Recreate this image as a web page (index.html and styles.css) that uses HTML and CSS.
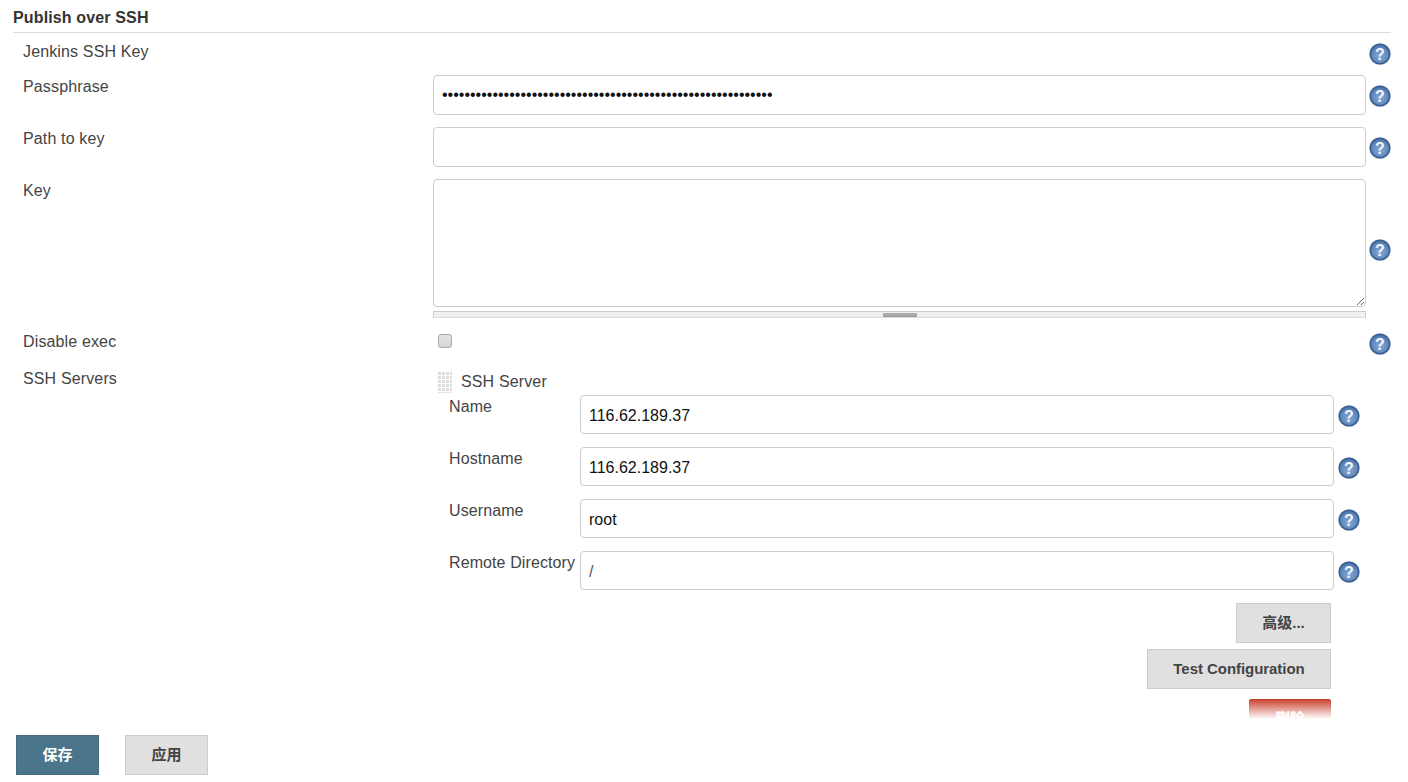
FILE: index.html
```html
<!DOCTYPE html>
<html lang="zh">
<head>
<meta charset="utf-8">
<title>Publish over SSH</title>
<link rel="stylesheet" href="styles.css">
</head>
<body>
<svg class="defs" width="0" height="0" aria-hidden="true">
  <defs>
    <radialGradient id="hg" cx="50%" cy="60%" r="55%">
      <stop offset="0" stop-color="#86a8d3"/>
      <stop offset="0.75" stop-color="#6189bd"/>
      <stop offset="1" stop-color="#4c74a8"/>
    </radialGradient>
    <symbol id="help" viewBox="0 0 22 22">
      <circle cx="11" cy="11" r="10.8" fill="#b4c5dc"/>
      <circle cx="11" cy="11" r="9.7" fill="url(#hg)" stroke="#3b5f92" stroke-width="1.5"/>
      <text x="11" y="17" text-anchor="middle" class="q">?</text>
    </symbol>
  </defs>
</svg>
<main class="page">
  <h3 class="title">Publish over SSH</h3>
  <div class="row row-key">
    <label class="lbl">Jenkins SSH Key</label>
    <div class="field"></div>
    <svg class="help"><use href="#help"/></svg>
  </div>
  <div class="row row-input">
    <label class="lbl">Passphrase</label>
    <div class="field"><input class="inp" type="password" value="•••••••••••••••••••••••••••••••••••••••••••••••••••••••••••"></div>
    <svg class="help"><use href="#help"/></svg>
  </div>
  <div class="row row-input">
    <label class="lbl">Path to key</label>
    <div class="field"><input class="inp" type="text"></div>
    <svg class="help"><use href="#help"/></svg>
  </div>
  <div class="row row-area">
    <label class="lbl">Key</label>
    <div class="field">
      <textarea class="area"></textarea>
      <div class="grip"><span class="grip-h"></span></div>
    </div>
    <svg class="help"><use href="#help"/></svg>
  </div>
  <div class="row row-check">
    <label class="lbl">Disable exec</label>
    <div class="field"><input class="chk" type="checkbox"></div>
    <svg class="help"><use href="#help"/></svg>
  </div>
  <div class="row row-servers">
    <label class="lbl">SSH Servers</label>
    <div class="field servers">
      <div class="srv-head"><span class="handle"></span><span>SSH Server</span></div>
      <div class="sub">
        <label class="lbl">Name</label>
        <input class="inp" type="text" value="116.62.189.37">
        <svg class="help"><use href="#help"/></svg>
      </div>
      <div class="sub">
        <label class="lbl">Hostname</label>
        <input class="inp" type="text" value="116.62.189.37">
        <svg class="help"><use href="#help"/></svg>
      </div>
      <div class="sub">
        <label class="lbl">Username</label>
        <input class="inp" type="text" value="root">
        <svg class="help"><use href="#help"/></svg>
      </div>
      <div class="sub">
        <label class="lbl">Remote Directory</label>
        <input class="inp dir" type="text" value="/">
        <svg class="help"><use href="#help"/></svg>
      </div>
      <div class="actions">
        <button class="btn adv">高级...</button>
        <button class="btn test">Test Configuration</button>
        <button class="btn del">删除</button>
      </div>
    </div>
  </div>
</main>
<footer class="bar">
  <button class="btn save">保存</button>
  <button class="btn apply">应用</button>
</footer>
</body>
</html>
```
FILE: styles.css
```css
* { box-sizing: border-box; }
html, body { margin: 0; height: 100%; }
body {
  position: relative;
  height: 782px;
  overflow: hidden;
  background: #fff;
  color: #333;
  font: 16px/20px "Liberation Sans", "Noto Sans CJK SC", sans-serif;
}
.defs { position: absolute; }
.q { font: bold 16px "Liberation Sans", sans-serif; fill: #f2f5fa; }
.page { margin-left: 13px; width: 1378px; }
.title {
  margin: 0;
  height: 33px;
  padding-top: 8px;
  font-size: 16px;
  font-weight: bold;
  letter-spacing: 0.14px;
  border-bottom: 1px solid #ddd;
}
.row {
  display: grid;
  grid-template-columns: 410px 933px 22px;
  column-gap: 0;
  margin-left: 10px;
}
.help { width: 22px; height: 22px; margin-left: 3px; overflow: visible; flex: none; }
.lbl { display: block; color: #444; letter-spacing: 0.14px; }
.row-key { height: 42px; padding-top: 9px; }
.row-input { height: 52px; }
.row-input .lbl { padding-top: 2px; }
.row-input .help { margin-top: 10px; }
.row-key .help { margin-top: 1px; }
.inp {
  display: block;
  width: 100%;
  height: 40px;
  padding: 0 8px;
  border: 1px solid #ccc;
  border-radius: 4px;
  background: #fff;
  color: #111;
  font: 16px "Liberation Sans", sans-serif;
  outline: none;
}
.row-area { height: 151px; }
.row-area .lbl { padding-top: 2px; }
.row-area .help { margin-top: 60px; }
.area {
  display: block;
  width: 100%;
  height: 128px;
  border: 1px solid #ccc;
  border-radius: 4px;
  background: #fff;
  outline: none;
}
.grip {
  display: flex;
  justify-content: center;
  height: 7px;
  margin-top: 4px;
  background: #f0f0f0;
  border: 1px solid #ccc;
  border-width: 1px 1px 0 1px;
  border-bottom: 1px solid #ddd;
}
.grip-h {
  width: 34px;
  height: 4px;
  margin-top: 1px;
  background: #aaa;
  border-bottom: 1px solid #999;
}
.row-check { height: 37px; }
.row-check .lbl { padding-top: 2px; }
.row-check .help { margin-top: 3px; }
.chk {
  appearance: none;
  display: block;
  width: 14px;
  height: 14px;
  margin: 4px 0 0 5px;
  background: linear-gradient(#e2e2e2, #d6d6d6);
  border: 1px solid #aaa;
  border-radius: 3px;
}
.row-servers { grid-template-columns: 410px 933px; }
.row-servers > .lbl { padding-top: 2px; }
.srv-head {
  display: flex;
  align-items: center;
  gap: 9px;
  height: 22px;
  margin: 4px 0 2px;
  padding-left: 4px;
  line-height: 22px;
  color: #444;
  letter-spacing: 0.14px;
}
.handle {
  width: 15px;
  height: 22px;
  background-image:
    linear-gradient(#fff 1px, transparent 1px),
    linear-gradient(90deg, #fff 1px, transparent 1px);
  background-size: 4px 4px;
  background-color: #dcdcdc;
}
.sub {
  display: grid;
  grid-template-columns: 131px 754px 22px;
  height: 52px;
  padding-left: 16px;
  width: 933px;
  white-space: nowrap;
}
.sub .inp { height: 39px; padding-top: 2px; }
.sub .help { margin-top: 10px; margin-left: 4px; }
.sub .lbl { padding-top: 2px; letter-spacing: 0.1px; }
.dir { color: #555; }
.actions {
  display: flex;
  flex-direction: column;
  align-items: flex-end;
  width: 898px;
}
.btn {
  display: block;
  height: 40px;
  padding: 0;
  border: 1px solid #ccc;
  background: #e0e0e0;
  color: #444;
  font: bold 15px/38px "Liberation Sans", "Noto Sans CJK SC", sans-serif;
}
.adv { width: 95px; }
.test { width: 184px; margin-top: 6px; letter-spacing: -0.05px; }
.del {
  width: 82px;
  margin-top: 10px;
  background: #c9402f;
  border-color: #b8392a;
  color: #fff;
  border-radius: 2px;
}
.bar {
  position: absolute;
  left: 0;
  right: 0;
  top: 699px;
  bottom: 0;
  padding: 36px 0 0 16px;
  display: flex;
  gap: 26px;
  align-items: flex-start;
  background: linear-gradient(rgba(255,255,255,0), #fff 20px);
}
.save {
  width: 83px;
  background: #4b758b;
  border-color: #466b80;
  color: #fff;
}
.apply { width: 83px; }
```
